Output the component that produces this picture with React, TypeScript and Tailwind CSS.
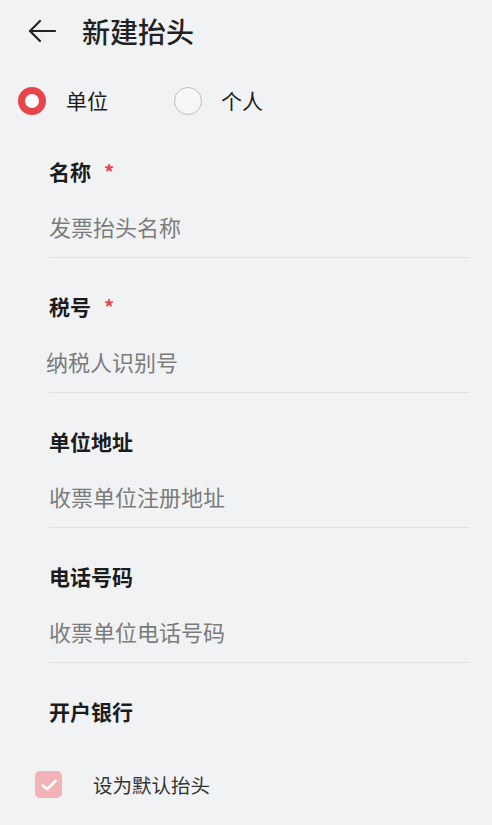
import { useState } from "react";

type FieldProps = {
    label: string,
    placeholder: string,
    required?: boolean,
    shift?: string,
}

function Field({ label, placeholder, required, shift }: FieldProps) {
    return (
        <div className="pt-[34px] pb-[16px] border-b border-[#dfe0e2]">
            <div className="flex items-center h-[30px] text-[21px] font-bold text-[#1c1c1c]">
                {label}
                {required && <span className="ml-[13px] text-[#e8434a] text-[20px] font-bold">*</span>}
            </div>
            <div className={"mt-[24px] h-[30px] flex items-center text-[22px] text-[#7b7b7b] " + (shift ?? "")}>
                {placeholder}
            </div>
        </div>
    );
}

export default function App() {
    const [type, setType] = useState("company");
    const [isDefault, setIsDefault] = useState(true);

    return (
        <div
            className="w-[492px] h-[825px] bg-[#f1f2f4] overflow-hidden"
            style={{ fontFamily: '"Noto Sans CJK SC", "Noto Sans", sans-serif' }}
        >
            {/* header */}
            <div className="flex items-center h-[62px] pl-[28px]">
                <svg width="28" height="24" viewBox="0 0 28 24" fill="none" stroke="#222" strokeWidth="2.2" strokeLinecap="round" strokeLinejoin="round">
                    <path d="M27 12H2" />
                    <path d="M12 2L2 12l10 10" />
                </svg>
                <div className="ml-[26px] text-[28px] font-medium text-[#222]">新建抬头</div>
            </div>

            {/* type radio */}
            <div className="flex items-center h-[40px] mt-[19px] pl-[18px]">
                <button onClick={() => setType("company")} className="flex items-center">
                    {type === "company" ? (
                        <span className="w-[28px] h-[28px] rounded-full border-[7px] border-[#e8454b] bg-white" />
                    ) : (
                        <span className="w-[28px] h-[28px] rounded-full border-[1.5px] border-[#bdbdbd] bg-[#f6f7f8]" />
                    )}
                    <span className="ml-[20px] text-[21px] text-[#1c1c1c]">单位</span>
                </button>
                <button onClick={() => setType("personal")} className="flex items-center ml-[66px]">
                    {type === "personal" ? (
                        <span className="w-[28px] h-[28px] rounded-full border-[7px] border-[#e8454b] bg-white" />
                    ) : (
                        <span className="w-[28px] h-[28px] rounded-full border-[1.5px] border-[#bdbdbd] bg-[#f6f7f8]" />
                    )}
                    <span className="ml-[19px] text-[21px] text-[#1c1c1c]">个人</span>
                </button>
            </div>

            {/* form */}
            <div className="pl-[49px] pr-[22px] mt-[2px]">
                <Field label="名称" placeholder="发票抬头名称" required />
                <Field label="税号" placeholder="纳税人识别号" required shift="ml-[-3px]" />
                <Field label="单位地址" placeholder="收票单位注册地址" />
                <Field label="电话号码" placeholder="收票单位电话号码" />
                <div className="pt-[34px]">
                    <div className="flex items-center h-[30px] text-[21px] font-bold text-[#1c1c1c]">开户银行</div>
                </div>
            </div>

            {/* default */}
            <button onClick={() => setIsDefault(!isDefault)} className="flex items-center mt-[43px] pl-[35px]">
                <span className={"w-[27px] h-[27px] rounded-[5px] flex items-center justify-center " + (isDefault ? "bg-[#f3b3b6]" : "bg-white border border-[#ccc]")}>
                    {isDefault && (
                        <svg width="20" height="20" viewBox="0 0 20 20" fill="none" stroke="white" strokeWidth="2.6" strokeLinecap="round" strokeLinejoin="round">
                            <path d="M4 10.5l4 3.8L16.5 6" />
                        </svg>
                    )}
                </span>
                <span className="ml-[31px] text-[19.5px] text-[#333]">设为默认抬头</span>
            </button>
        </div>
    );
}
